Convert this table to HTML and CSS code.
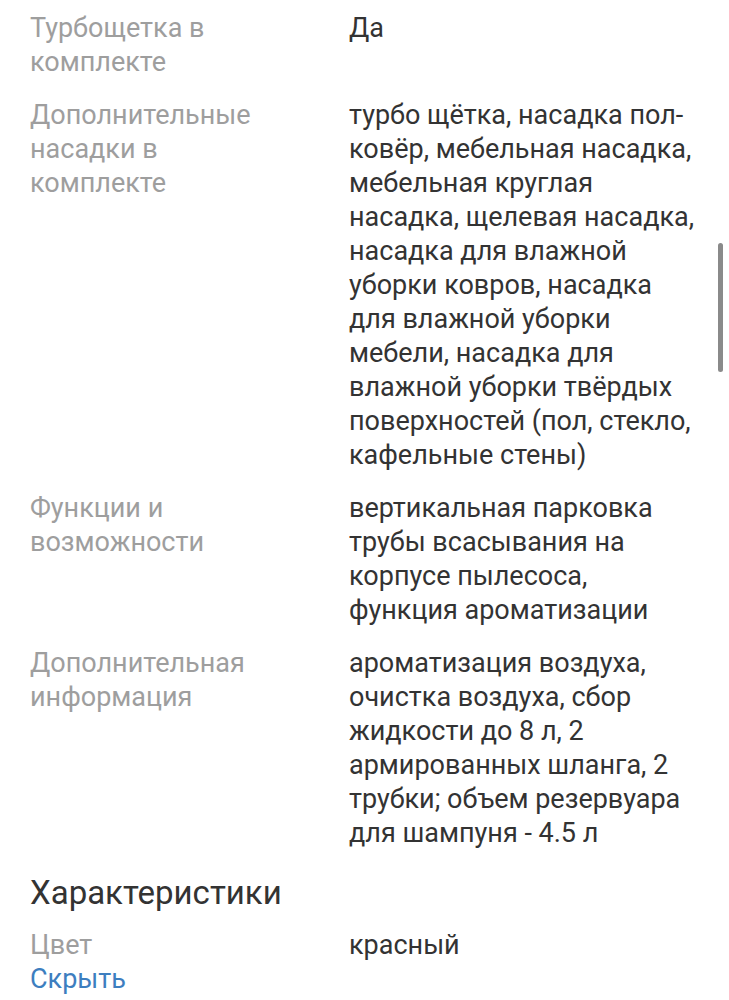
FILE: index.html
```html
<!DOCTYPE html>
<html lang="ru">
<head>
<meta charset="utf-8">
<link rel="stylesheet" href="styles.css">
</head>
<body>
<div class="page">
  <dl class="specs">
    <dt class="label">Турбощетка в комплекте</dt>
    <dd class="value">Да</dd>
    <dt class="label">Дополнительные насадки в комплекте</dt>
    <dd class="value">турбо щётка, насадка пол-ковёр, мебельная насадка, мебельная круглая насадка, щелевая насадка, насадка для влажной уборки ковров, насадка для влажной уборки мебели, насадка для влажной уборки твёрдых поверхностей (пол, стекло, кафельные стены)</dd>
    <dt class="label">Функции и возможности</dt>
    <dd class="value">вертикальная парковка трубы всасывания на корпусе пылесоса, функция ароматизации</dd>
    <dt class="label">Дополнительная информация</dt>
    <dd class="value">ароматизация воздуха, очистка воздуха, сбор жидкости до 8 л, 2 армированных шланга, 2 трубки; объем резервуара для шампуня - 4.5 л</dd>
  </dl>
  <h2 class="heading">Характеристики</h2>
  <dl class="specs compact">
    <dt class="label">Цвет</dt>
    <dd class="value">красный</dd>
  </dl>
  <a class="toggle" href="#">Скрыть</a>
</div>
<div class="scrollbar"></div>
</body>
</html>
```
FILE: styles.css
```css
html, body {
  margin: 0;
  padding: 0;
  background: #ffffff;
}
body {
  font-family: Roboto, "Noto Sans", sans-serif;
  font-size: 27px;
  line-height: 34px;
  color: #333333;
}
.page {
  padding: 11px 30px 0 30px;
}
.specs {
  display: grid;
  grid-template-columns: 319px 350px;
  row-gap: 19px;
  margin: 0;
}
.specs .label {
  color: #9e9e9e;
  margin: 0;
  padding-right: 65px;
}
.specs .value {
  margin: 0;
  color: #333333;
}
.heading {
  font-size: 33px;
  font-weight: 400;
  line-height: 40px;
  margin: 23px 0 15px 0;
  color: #333333;
}
.toggle {
  display: block;
  color: #3d7ebf;
  text-decoration: none;
}
.scrollbar {
  position: fixed;
  left: 718px;
  top: 243px;
  width: 5px;
  height: 129px;
  border-radius: 3px;
  background: #8a8a8a;
}
```
